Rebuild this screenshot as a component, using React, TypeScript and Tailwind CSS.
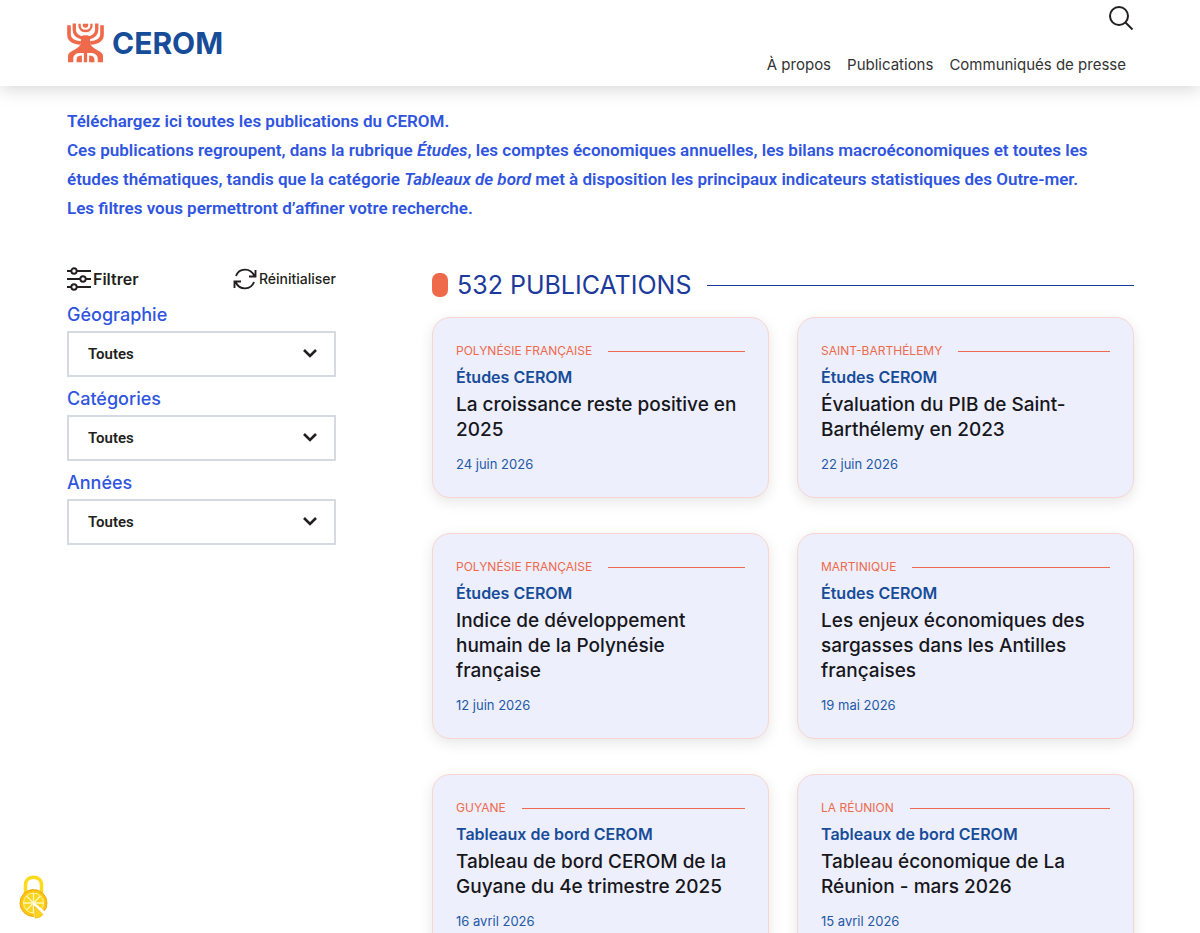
const navLinks = ["À propos", "Publications", "Communiqués de presse"];

const filters = [
  { id: "geographie", label: "Géographie" },
  { id: "categories", label: "Catégories" },
  { id: "annees", label: "Années" },
];

const publications = [
  {
    region: "Polynésie française",
    category: "Études CEROM",
    title: "La croissance reste positive en 2025",
    date: "24 juin 2026",
  },
  {
    region: "Saint-Barthélemy",
    category: "Études CEROM",
    title: "Évaluation du PIB de Saint-Barthélemy en 2023",
    date: "22 juin 2026",
  },
  {
    region: "Polynésie française",
    category: "Études CEROM",
    title: "Indice de développement humain de la Polynésie française",
    date: "12 juin 2026",
  },
  {
    region: "Martinique",
    category: "Études CEROM",
    title: "Les enjeux économiques des sargasses dans les Antilles françaises",
    date: "19 mai 2026",
  },
  {
    region: "Guyane",
    category: "Tableaux de bord CEROM",
    title: "Tableau de bord CEROM de la Guyane du 4e trimestre 2025",
    date: "16 avril 2026",
  },
  {
    region: "La Réunion",
    category: "Tableaux de bord CEROM",
    title: "Tableau économique de La Réunion - mars 2026",
    date: "15 avril 2026",
  },
];

const LogoMark = () => (
  <svg
    width="37"
    height="40"
    viewBox="0 0 112 120"
    fill="none"
    stroke="#ee6a4b"
    strokeWidth="10"
    aria-hidden="true"
  >
    <path d="M48 2H64V7C64 16 48 16 48 7Z" fill="#ee6a4b" stroke="none" />
    <path d="M38 2V8C38 29 74 29 74 8V2" strokeWidth="7" />
    <path d="M22 1V20C22 34 32 42 48 45M90 1V20C90 34 80 42 64 45" />
    <path d="M6 6V34C6 48 18 58 42 60M106 6V34C106 48 94 58 70 60" strokeWidth="11" />
    <path d="M42 41C50 35 62 35 70 41V72H42Z" fill="#ee6a4b" stroke="none" />
    <path
      d="M3 118V100C3 82 32 82 40 65H72C80 82 109 82 109 100V118H93V108C93 96 84 90 70 90H42C28 90 19 96 19 108V118Z"
      fill="#ee6a4b"
      stroke="none"
    />
    <path
      d="M29 118V110C29 102 35 98 45 98V118ZM83 118V110C83 102 77 98 67 98V118ZM51 86H61V118H51Z"
      fill="#ee6a4b"
      stroke="none"
    />
  </svg>
);

const SearchIcon = () => (
  <svg
    width="26"
    height="26"
    viewBox="0 0 26 26"
    fill="none"
    stroke="#231f20"
    strokeWidth="2"
    aria-hidden="true"
  >
    <circle cx="11" cy="11" r="9" />
    <path d="M17.5 17.5L24.5 24.5" />
  </svg>
);

const SlidersIcon = () => (
  <svg
    width="24"
    height="24"
    viewBox="0 0 24 24"
    fill="none"
    stroke="#231f20"
    strokeWidth="1.9"
    aria-hidden="true"
  >
    <path d="M0 4H4M10 4H24M0 12H13M19 12H24M0 20H4M10 20H24" />
    <circle cx="7" cy="4" r="2.7" />
    <circle cx="16" cy="12" r="2.7" />
    <circle cx="7" cy="20" r="2.7" />
  </svg>
);

const ResetIcon = () => (
  <svg
    width="24"
    height="22"
    viewBox="0 0 24 22"
    fill="none"
    stroke="#231f20"
    strokeWidth="1.9"
    aria-hidden="true"
  >
    <path d="M3 8C6 0 17 -1 21.5 8M22.5 2V8.5H16" />
    <path d="M21 14C18 22 7 23 2.5 14M1.5 20V13.5H8" />
  </svg>
);

const ChevronIcon = () => (
  <svg
    width="14"
    height="9"
    viewBox="0 0 14 9"
    fill="none"
    stroke="#231f20"
    strokeWidth="2.6"
    aria-hidden="true"
    className="pointer-events-none absolute top-[18px] right-[19px]"
  >
    <path d="M1 1L7 7L13 1" />
  </svg>
);

const CookieIcon = () => (
  <svg width="30" height="44" viewBox="0 0 30 44" fill="none" aria-hidden="true">
    <path d="M6.5 19V10C6.5 -0.5 22.5 -0.5 22.5 10V19" stroke="#fddb1c" strokeWidth="3.5" />
    <circle cx="14.5" cy="28" r="13.5" fill="#fdc70c" stroke="#eba51c" />
    <circle cx="14.5" cy="28" r="10" fill="#fbd51c" stroke="#fff3a8" />
    <path
      d="M14.5 28V18M14.5 28L7.5 21M14.5 28H4.5M14.5 28L7.5 35M14.5 28V38M14.5 28L21.5 21M14.5 28H24.5"
      stroke="#fff6bf"
      strokeWidth="1.3"
    />
    <path d="M14.5 27L28 38L24 43H15Z" fill="#fff" />
    <path d="M15.5 31L24 39.5C22 42 19 43 16 43Z" fill="#fbd51c" stroke="#f3b61c" strokeWidth="0.8" />
  </svg>
);

const Header = () => (
  <header className="relative flex h-[86px] justify-between bg-white pr-[66px] pl-[67px] shadow-[0_2px_18px_rgba(0,0,0,0.18)]">
    <a href="#" aria-label="CEROM" className="flex items-center gap-2">
      <LogoMark />
      <span className="text-[30px] font-bold text-[#174c99]">CEROM</span>
    </a>
    <div className="flex flex-col items-end justify-between pt-[5px] pb-[9px]">
      <button type="button" aria-label="Rechercher">
        <SearchIcon />
      </button>
      <nav aria-label="Navigation principale" className="flex gap-4 pr-2">
        {navLinks.map((link) => (
          <a key={link} href="#" className="text-[15px] leading-6 text-[#333]">
            {link}
          </a>
        ))}
      </nav>
    </div>
  </header>
);

const Filters = () => (
  <form className="w-[269px] shrink-0">
    <div className="mb-2 flex items-center justify-between text-[#231f20]">
      <p className="flex items-center gap-[2px] text-base leading-7 font-semibold">
        <SlidersIcon />
        Filtrer
      </p>
      <button type="reset" className="flex items-center gap-[2px] text-sm font-medium">
        <ResetIcon />
        Réinitialiser
      </button>
    </div>
    {filters.map((filter) => (
      <div key={filter.id} className="mb-2">
        <label htmlFor={filter.id} className="block pb-[2px] text-lg leading-7 font-medium text-[#2f55e0]">
          {filter.label}
        </label>
        <div className="relative">
          <select
            id={filter.id}
            className="h-[46px] w-full appearance-none border-2 border-[#d5d9e2] bg-white px-[19px] font-[Roboto,sans-serif] text-[15px] font-semibold text-[#231f20]"
          >
            <option>Toutes</option>
          </select>
          <ChevronIcon />
        </div>
      </div>
    ))}
  </form>
);

type Publication = (typeof publications)[number];

const PublicationCard = ({ region, category, title, date }: Publication) => (
  <article className="rounded-[18px] border border-[#f9d5d0] bg-[#edeffd] p-[23px] shadow-[0_4px_14px_rgba(0,0,0,0.1)]">
    <div className="flex items-center gap-4 text-[#ee6a4b]">
      <span className="text-xs leading-5 uppercase">{region}</span>
      <span className="h-px flex-1 bg-[#ee6a4b]" />
    </div>
    <p className="mt-1 text-base leading-6 font-semibold text-[#174c99]">{category}</p>
    <h3 className="mt-[3px] text-[19px] leading-[25px] font-medium text-[#17171c]">
      <a href="#">{title}</a>
    </h3>
    <p className="mt-3 text-[13px] leading-5 text-[#2459a5]">{date}</p>
  </article>
);

export default function App() {
  return (
    <div className="h-screen overflow-hidden bg-white font-[Inter,sans-serif]">
      <Header />
      <main className="pt-[21px] pr-[66px] pl-[67px]">
        <p className="font-[Roboto,sans-serif] text-[17px] leading-[29px] font-semibold text-[#2f55e0]">
          Téléchargez ici toutes les publications du CEROM.
          <br />
          Ces publications regroupent, dans la rubrique <em>Études</em>, les comptes économiques annuelles, les bilans
          macroéconomiques et toutes les
          <br />
          études thématiques, tandis que la catégorie <em>Tableaux de bord</em> met à disposition les principaux
          indicateurs statistiques des Outre-mer.
          <br />
          Les filtres vous permettront d’affiner votre recherche.
        </p>
        <div className="mt-[42px] flex gap-24">
          <Filters />
          <section className="min-w-0 flex-1">
            <div className="flex items-center">
              <span className="mr-[9px] h-6 w-4 rounded-[7px] bg-[#ee6a4b]" />
              <h2 className="text-[25px] leading-10 font-normal text-[#1c3a9b]">532 PUBLICATIONS</h2>
              <span className="ml-4 h-px flex-1 bg-[#1c3a9b]" />
            </div>
            <div className="mt-3 grid grid-cols-2 gap-x-7 gap-y-[35px]">
              {publications.map((publication) => (
                <PublicationCard key={publication.title} {...publication} />
              ))}
            </div>
          </section>
        </div>
      </main>
      <button type="button" aria-label="Gérer les cookies" className="fixed bottom-[14px] left-[19px]">
        <CookieIcon />
      </button>
    </div>
  );
}
